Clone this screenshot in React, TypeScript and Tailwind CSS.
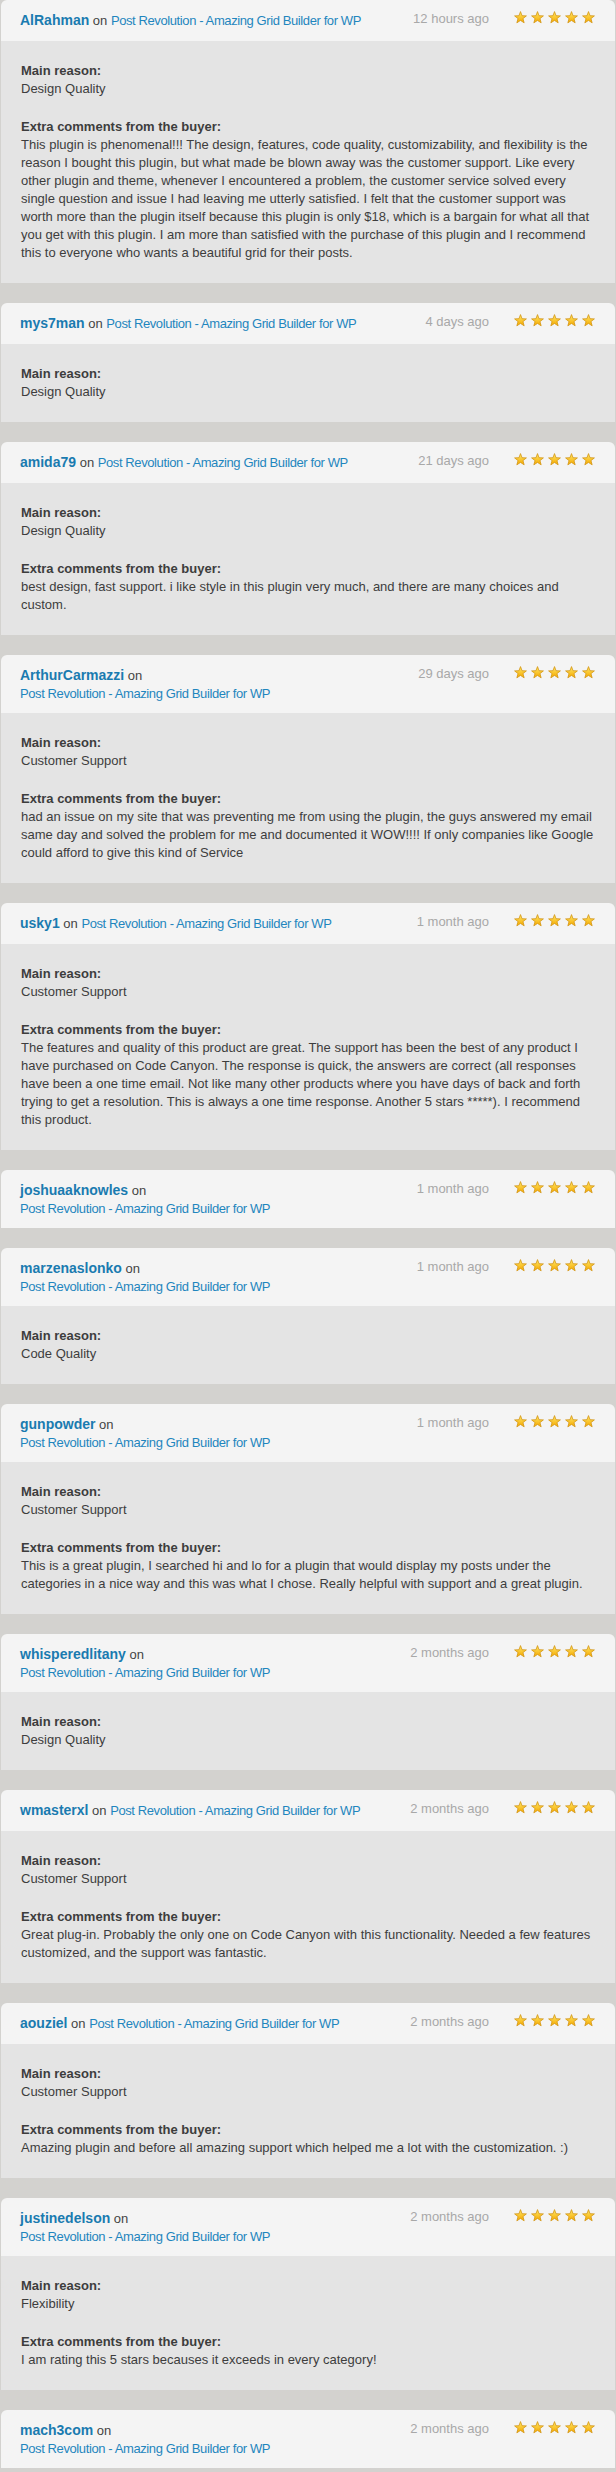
type Review = {
  name: string;
  time: string;
  wrap?: boolean;
  reason?: string;
  comment?: string;
};

const PRODUCT = "Post Revolution - Amazing Grid Builder for WP";

const reviews: Review[] = [
  {
    name: "AlRahman",
    time: "12 hours ago",
    reason: "Design Quality",
    comment:
      "This plugin is phenomenal!!! The design, features, code quality, customizability, and flexibility is the reason I bought this plugin, but what made be blown away was the customer support. Like every other plugin and theme, whenever I encountered a problem, the customer service solved every single question and issue I had leaving me utterly satisfied. I felt that the customer support was worth more than the plugin itself because this plugin is only $18, which is a bargain for what all that you get with this plugin. I am more than satisfied with the purchase of this plugin and I recommend this to everyone who wants a beautiful grid for their posts.",
  },
  { name: "mys7man", time: "4 days ago", reason: "Design Quality" },
  {
    name: "amida79",
    time: "21 days ago",
    reason: "Design Quality",
    comment:
      "best design, fast support. i like style in this plugin very much, and there are many choices and custom.",
  },
  {
    name: "ArthurCarmazzi",
    time: "29 days ago",
    wrap: true,
    reason: "Customer Support",
    comment:
      "had an issue on my site that was preventing me from using the plugin, the guys answered my email same day and solved the problem for me and documented it WOW!!!! If only companies like Google could afford to give this kind of Service",
  },
  {
    name: "usky1",
    time: "1 month ago",
    reason: "Customer Support",
    comment:
      "The features and quality of this product are great. The support has been the best of any product I have purchased on Code Canyon. The response is quick, the answers are correct (all responses have been a one time email. Not like many other products where you have days of back and forth trying to get a resolution. This is always a one time response. Another 5 stars *****). I recommend this product.",
  },
  { name: "joshuaaknowles", time: "1 month ago", wrap: true },
  { name: "marzenaslonko", time: "1 month ago", wrap: true, reason: "Code Quality" },
  {
    name: "gunpowder",
    time: "1 month ago",
    wrap: true,
    reason: "Customer Support",
    comment:
      "This is a great plugin, I searched hi and lo for a plugin that would display my posts under the categories in a nice way and this was what I chose. Really helpful with support and a great plugin.",
  },
  { name: "whisperedlitany", time: "2 months ago", wrap: true, reason: "Design Quality" },
  {
    name: "wmasterxl",
    time: "2 months ago",
    reason: "Customer Support",
    comment:
      "Great plug-in. Probably the only one on Code Canyon with this functionality. Needed a few features customized, and the support was fantastic.",
  },
  {
    name: "aouziel",
    time: "2 months ago",
    reason: "Customer Support",
    comment:
      "Amazing plugin and before all amazing support which helped me a lot with the customization. :)",
  },
  {
    name: "justinedelson",
    time: "2 months ago",
    wrap: true,
    reason: "Flexibility",
    comment: "I am rating this 5 stars becauses it exceeds in every category!",
  },
  { name: "mach3com", time: "2 months ago", wrap: true },
];

const Star = () => (
  <svg width="13" height="13" viewBox="0 0 13 13">
    <defs>
      <linearGradient id="starFill" x1="0" y1="0" x2="0" y2="1">
        <stop offset="0" stopColor="#ffe766" />
        <stop offset="1" stopColor="#f5a900" />
      </linearGradient>
    </defs>
    <polygon
      points="6.5,0.6 8.03,4.7 12.4,4.88 8.97,7.6 10.15,11.82 6.5,9.4 2.85,11.82 4.03,7.6 0.6,4.88 4.97,4.7"
      fill="url(#starFill)"
      stroke="#d39514"
      strokeWidth="0.8"
      strokeLinejoin="round"
    />
  </svg>
);

const ReviewCard = ({ review }: { review: Review }) => {
  const { name, time, wrap, reason, comment } = review;
  return (
    <div className="overflow-hidden rounded-t-md">
      {/* header row */}
      <div
        className={`flex items-start bg-[#f4f4f4] pl-[19px] pr-5 pt-3 ${
          wrap ? "pb-[10px]" : "pb-[11px]"
        }`}
      >
        <div className="min-w-0 flex-1">
          <span className="text-[14px] leading-[17px] font-bold text-[#1a7bb0]">{name}</span>
          <span className="text-[#444]"> on </span>
          {wrap && <br />}
          <span className="tracking-[-0.4px] text-[#1f86be]">{PRODUCT}</span>
        </div>
        <div className="-mt-0.5 shrink-0 text-[#a8a8a8]">{time}</div>
        <div className="-mt-px ml-[25px] flex shrink-0 gap-1">
          <Star />
          <Star />
          <Star />
          <Star />
          <Star />
        </div>
      </div>

      {reason && (
        <div className="bg-[#e4e4e4] px-5 py-[21px]">
          <div>
            <div className="font-bold">Main reason:</div>
            <div>{reason}</div>
          </div>
          {comment && (
            <div className="mt-5">
              <div className="font-bold">Extra comments from the buyer:</div>
              <p>{comment}</p>
            </div>
          )}
        </div>
      )}
    </div>
  );
};

const App = () => {
  return (
    <div className="min-h-screen bg-[#d3d2cf] px-px font-['Liberation_Sans',Arial,sans-serif] text-[13px] leading-[18px] text-[#3d3d3d]">
      <div className="flex flex-col gap-5">
        {reviews.map((r) => (
          <ReviewCard key={r.name} review={r} />
        ))}
      </div>
    </div>
  );
};

export default App;
